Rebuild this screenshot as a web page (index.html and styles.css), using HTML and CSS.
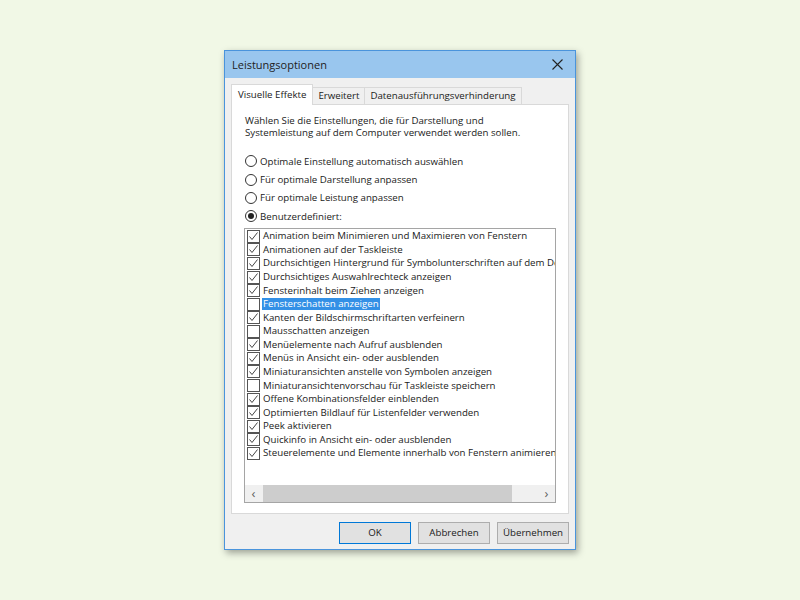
FILE: index.html
```html
<!DOCTYPE html>
<html lang="de">

<head>
    <meta charset="UTF-8">
    <title>Leistungsoptionen</title>
    <link rel="stylesheet" href="styles.css">
</head>

<body>
    <div class="window">
        <div class="titlebar">
            <span class="title">Leistungsoptionen</span>
            <svg class="close" width="11" height="11" viewBox="0 0 11 11">
                <path d="M0.5 0.5 L10.5 10.5 M10.5 0.5 L0.5 10.5" stroke="#222" stroke-width="1.1" fill="none" />
            </svg>
        </div>
        <div class="content">
            <div class="tabs">
                <div class="tab active">Visuelle Effekte</div>
                <div class="tab">Erweitert</div>
                <div class="tab">Datenausführungsverhinderung</div>
            </div>
            <div class="panel">
                <p class="intro">Wählen Sie die Einstellungen, die für Darstellung und<br>Systemleistung auf dem Computer verwendet werden sollen.</p>
                <div class="radios">
                    <label class="radio"><span class="dot"></span>Optimale Einstellung automatisch auswählen</label>
                    <label class="radio"><span class="dot"></span>Für optimale Darstellung anpassen</label>
                    <label class="radio"><span class="dot"></span>Für optimale Leistung anpassen</label>
                    <label class="radio"><span class="dot checked"></span>Benutzerdefiniert:</label>
                </div>
                <div class="listbox">
                    <div class="items" id="items"></div>
                    <div class="hscroll">
                        <span class="arrow">&lsaquo;</span>
                        <div class="track"><div class="thumb"></div></div>
                        <span class="arrow">&rsaquo;</span>
                    </div>
                </div>
            </div>
            <div class="buttons">
                <div class="btn default">OK</div>
                <div class="btn">Abbrechen</div>
                <div class="btn">Übernehmen</div>
            </div>
        </div>
    </div>
    <script>
        const effects = [
            ["Animation beim Minimieren und Maximieren von Fenstern", true],
            ["Animationen auf der Taskleiste", true],
            ["Durchsichtigen Hintergrund für Symbolunterschriften auf dem Desktop", true],
            ["Durchsichtiges Auswahlrechteck anzeigen", true],
            ["Fensterinhalt beim Ziehen anzeigen", true],
            ["Fensterschatten anzeigen", false, true],
            ["Kanten der Bildschirmschriftarten verfeinern", true],
            ["Mausschatten anzeigen", false],
            ["Menüelemente nach Aufruf ausblenden", true],
            ["Menüs in Ansicht ein- oder ausblenden", true],
            ["Miniaturansichten anstelle von Symbolen anzeigen", true],
            ["Miniaturansichtenvorschau für Taskleiste speichern", false],
            ["Offene Kombinationsfelder einblenden", true],
            ["Optimierten Bildlauf für Listenfelder verwenden", true],
            ["Peek aktivieren", true],
            ["Quickinfo in Ansicht ein- oder ausblenden", true],
            ["Steuerelemente und Elemente innerhalb von Fenstern animieren", true]
        ];

        const check = '<svg width="11" height="11" viewBox="0 0 11 11"><polyline points="1.5,5.5 4,8.5 9.5,1.5" fill="none" stroke="#444" stroke-width="1"/></svg>';
        const list = document.getElementById("items");

        effects.forEach(([label, on, selected]) => {
            let row = document.createElement("div");
            row.className = "item";
            row.innerHTML = '<span class="box">' + (on ? check : '') + '</span>' +
                '<span class="label' + (selected ? ' selected' : '') + '">' + label + '</span>';
            list.appendChild(row);
        });
    </script>
</body>

</html>
```
FILE: styles.css
```css
* {
    box-sizing: border-box;
}

body {
    margin: 0;
    height: 600px;
    display: flex;
    align-items: center;
    justify-content: center;
    background: #f1f8e6;
    font-family: "Open Sans", "Liberation Sans", sans-serif;
    font-size: 9.7px;
    color: #1a1a1a;
}

.window {
    width: 352px;
    height: 500px;
    border: 1px solid #4a94dc;
    background: #f0f0f0;
    box-shadow: 2px 3px 7px rgba(0, 0, 0, 0.35);
    display: flex;
    flex-direction: column;
}

.titlebar {
    height: 27px;
    flex: none;
    background: #99c6ee;
    display: flex;
    align-items: center;
    justify-content: space-between;
    padding: 0 12px 0 7px;
}

.title {
    font-size: 11px;
    color: #222;
}

.content {
    padding: 6px 6px 0 6px;
}

.tabs {
    display: flex;
    align-items: flex-end;
    height: 20px;
}

.tab {
    height: 17px;
    line-height: 16px;
    padding: 0 5px;
    border: 1px solid #d9d9d9;
    border-bottom: none;
    margin-left: -1px;
    background: #f0f0f0;
}

.tab.active {
    height: 21px;
    line-height: 19px;
    margin-left: 0;
    padding: 0 6px;
    background: #fff;
    position: relative;
    margin-bottom: -1px;
    z-index: 1;
}

.panel {
    height: 410px;
    background: #fff;
    border: 1px solid #d9d9d9;
    padding: 10px 12px 0 13px;
}

.intro {
    margin: 0;
    line-height: 12px;
}

.radios {
    margin-top: 13px;
    display: flex;
    flex-direction: column;
}

.radio {
    height: 18.4px;
    display: flex;
    align-items: center;
    gap: 3px;
}

.dot {
    width: 12px;
    height: 12px;
    border: 1px solid #333;
    border-radius: 50%;
    display: flex;
    align-items: center;
    justify-content: center;
}

.dot.checked::after {
    content: "";
    width: 6px;
    height: 6px;
    border-radius: 50%;
    background: #222;
}

.listbox {
    margin-top: 2px;
    margin-left: -1px;
    width: 312px;
    height: 275px;
    border: 1px solid #a5a5a5;
    display: flex;
    flex-direction: column;
}

.items {
    flex: 1;
    overflow: hidden;
    padding-top: 1px;
}

.item {
    height: 13.57px;
    display: flex;
    align-items: center;
    white-space: nowrap;
    padding-left: 2px;
}

.box {
    flex: none;
    width: 13px;
    height: 13px;
    border: 1px solid #555;
    margin-right: 2px;
    display: flex;
    align-items: center;
    justify-content: center;
}

.label {
    padding: 0 1px;
    line-height: 12px;
}

.label.selected {
    background: #3390e6;
    color: #fff;
}

.hscroll {
    height: 17px;
    flex: none;
    display: flex;
    align-items: center;
    background: #f0f0f0;
}

.arrow {
    width: 17px;
    text-align: center;
    font-size: 13px;
    color: #606060;
}

.track {
    flex: 1;
    height: 17px;
    display: flex;
}

.thumb {
    width: 249px;
    margin-left: 1px;
    background: #cdcdcd;
}

.buttons {
    display: flex;
    justify-content: flex-end;
    gap: 7px;
    margin-top: 8px;
}

.btn {
    width: 72px;
    height: 22px;
    line-height: 20px;
    text-align: center;
    background: #e1e1e1;
    border: 1px solid #adadad;
}

.btn.default {
    border-color: #0078d7;
}
```
